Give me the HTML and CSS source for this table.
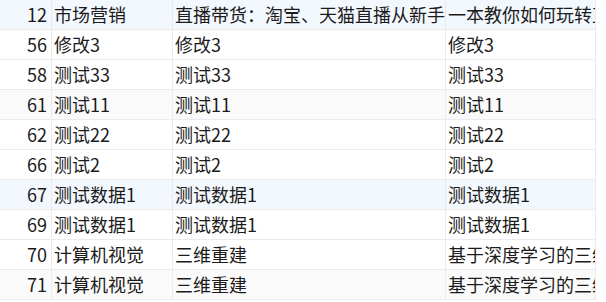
FILE: index.html
```html
<!DOCTYPE html>
<html lang="zh-CN">
<head>
<meta charset="utf-8">
<title>数据表</title>
<link rel="stylesheet" href="styles.css">
</head>
<body>
<table class="grid">
  <colgroup>
    <col class="c-id">
    <col class="c-name">
    <col class="c-title">
    <col class="c-desc">
  </colgroup>
  <tbody>
    <tr class="row hl"><td class="id">12</td><td>市场营销</td><td>直播带货：淘宝、天猫直播从新手</td><td>一本教你如何玩转直播带货</td></tr>
    <tr class="row"><td class="id">56</td><td>修改3</td><td>修改3</td><td>修改3</td></tr>
    <tr class="row"><td class="id">58</td><td>测试33</td><td>测试33</td><td>测试33</td></tr>
    <tr class="row alt"><td class="id">61</td><td>测试11</td><td>测试11</td><td>测试11</td></tr>
    <tr class="row"><td class="id">62</td><td>测试22</td><td>测试22</td><td>测试22</td></tr>
    <tr class="row"><td class="id">66</td><td>测试2</td><td>测试2</td><td>测试2</td></tr>
    <tr class="row hl"><td class="id">67</td><td>测试数据1</td><td>测试数据1</td><td>测试数据1</td></tr>
    <tr class="row"><td class="id">69</td><td>测试数据1</td><td>测试数据1</td><td>测试数据1</td></tr>
    <tr class="row"><td class="id">70</td><td>计算机视觉</td><td>三维重建</td><td>基于深度学习的三维重建研究</td></tr>
    <tr class="row alt"><td class="id">71</td><td>计算机视觉</td><td>三维重建</td><td>基于深度学习的三维重建研究</td></tr>
  </tbody>
</table>
</body>
</html>
```

FILE: styles.css
```css
html, body {
  margin: 0;
  padding: 0;
  background: #ffffff;
}

.grid {
  border-collapse: separate;
  border-spacing: 0;
  table-layout: fixed;
  width: 596px;
  font-family: "Noto Sans CJK SC", "Noto Sans", sans-serif;
  font-size: 18px;
  color: #1b1b1b;
}

.c-id { width: 52px; }
.c-name { width: 121px; }
.c-title { width: 273px; }
.c-desc { width: 150px; }

.grid td {
  box-sizing: border-box;
  height: 30px;
  padding: 0 0 0 2px;
  line-height: 29px;
  border-right: 1px solid #e9ebee;
  border-bottom: 1px solid #e9ebee;
  white-space: nowrap;
  overflow: hidden;
  vertical-align: middle;
}

.grid td.id {
  text-align: right;
  padding: 0 4px 0 0;
}

.row { background: #ffffff; }
.row.hl { background: #f3f8fe; }
.row.alt { background: #fafafa; }
```
